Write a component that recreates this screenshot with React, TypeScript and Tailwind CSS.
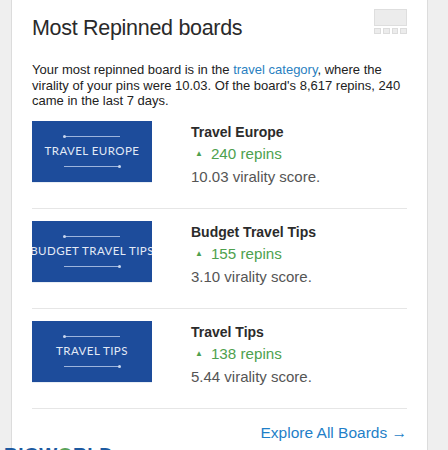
import React from 'react';

const BOARDS = [
    { label: 'TRAVEL EUROPE', name: 'Travel Europe', repins: '240 repins', score: '10.03 virality score.' },
    { label: 'BUDGET TRAVEL TIPS', name: 'Budget Travel Tips', repins: '155 repins', score: '3.10 virality score.' },
    { label: 'TRAVEL TIPS', name: 'Travel Tips', repins: '138 repins', score: '5.44 virality score.' },
];

function BoardCover({ label }: { label: string }) {
    return (
        <div className="w-[120px] h-[62px] shrink-0 border-b border-[#e8eef4] bg-[#1d4c9b] flex flex-col items-center justify-center overflow-hidden">
            <div className="relative w-[56px] h-px bg-[#9db4dc]">
                <span className="absolute -left-px -top-px w-[3px] h-[3px] rounded-full bg-[#c9d6ee]" />
            </div>
            <div className="mt-[7px] mb-[8px] text-[11.5px] leading-[14px] tracking-[0.45px] text-[#e3eaf6] whitespace-nowrap font-['Lato',sans-serif]">
                {label}
            </div>
            <div className="relative w-[56px] h-px bg-[#9db4dc]">
                <span className="absolute -right-px -top-px w-[3px] h-[3px] rounded-full bg-[#c9d6ee]" />
            </div>
        </div>
    );
}

export default function App() {
    return (
        <div className="relative w-[448px] h-[450px] overflow-hidden bg-[#efefef] font-['Liberation_Sans',Arial,sans-serif]">
            <div className="ml-[11px] w-[417px] h-[450px] bg-white border-l border-r border-[#dcdcdc] px-[20px]">
                {/* Header */}
                <div className="flex justify-between items-start">
                    <h2 className="mt-[15px] text-[21.5px] leading-[26px] tracking-[-0.3px] text-[#2a2a2a]">Most Repinned boards</h2>
                    <div className="mt-[9px] flex flex-col gap-[2px]">
                        <div className="w-[33px] h-[17px] bg-[#ececec] border border-[#dedede]" />
                        <div className="flex gap-[2px]">
                            <div className="w-[6.75px] h-[6px] bg-[#ececec] border border-[#dcdcdc]" />
                            <div className="w-[6.75px] h-[6px] bg-[#ececec] border border-[#dcdcdc]" />
                            <div className="w-[6.75px] h-[6px] bg-[#ececec] border border-[#dcdcdc]" />
                            <div className="w-[6.75px] h-[6px] bg-[#ececec] border border-[#dcdcdc]" />
                        </div>
                    </div>
                </div>

                <p className="mt-[21px] text-[13px] leading-[15.5px] text-[#222]">
                    Your most repinned board is in the <span className="text-[#2a7fc1]">travel category</span>, where the virality of your pins were 10.03. Of the board's 8,617 repins, 240 came in the last 7 days.
                </p>

                {/* Boards */}
                <div className="mt-[12px]">
                    {BOARDS.map((b, i) => (
                        <div key={b.name} className={`border-b border-[#e6e6e6] pb-[25px] ${i > 0 ? 'pt-[12px]' : ''}`}>
                            <div className="flex h-[62px]">
                                <BoardCover label={b.label} />
                                <div className="ml-[39px] pt-[2px]">
                                    <div className="text-[14px] leading-[18px] font-bold text-[#2b2b2b]">{b.name}</div>
                                    <div className="mt-[3px] flex items-center text-[15.2px] leading-[20px] text-[#4ea14e]">
                                        <span className="ml-[4px] mr-[8px] text-[8px] leading-[20px]">▲</span>
                                        {b.repins}
                                    </div>
                                    <div className="mt-[3px] text-[15px] leading-[20px] text-[#555]">{b.score}</div>
                                </div>
                            </div>
                        </div>
                    ))}
                </div>

                <div className="mt-[14px] flex justify-end">
                    <a className="text-[15.5px] leading-[20px] text-[#1f7fc8]">Explore All Boards →</a>
                </div>
            </div>

            {/* partially visible logo */}
            <div className="absolute left-[4px] top-[445px] text-[19px] leading-[20px] font-bold tracking-[0.5px] text-[#1d5aa0]">
                BIGW<span className="text-[#5aa35a]">O</span>RLD
            </div>
        </div>
    );
}
